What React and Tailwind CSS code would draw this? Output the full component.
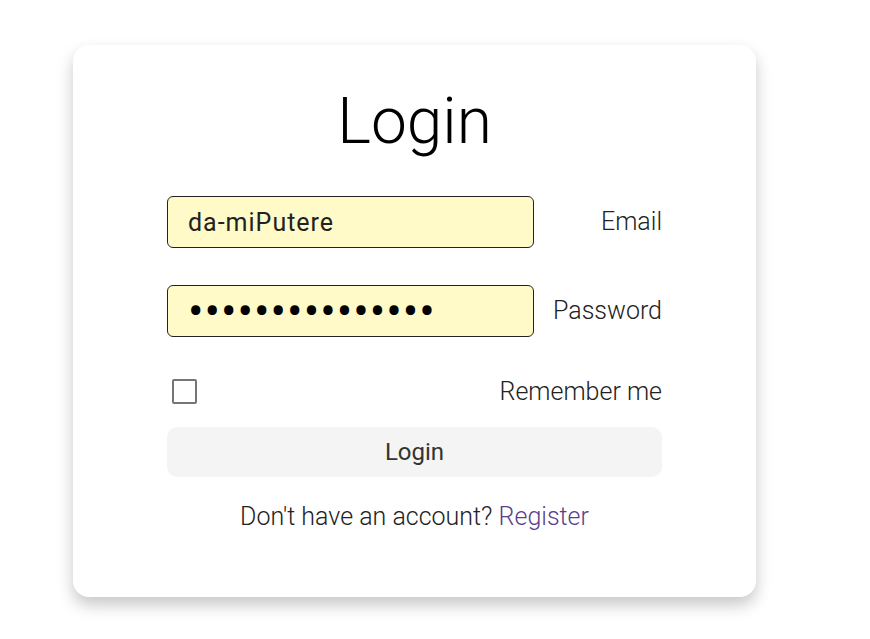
import React, { useState } from 'react';

function App() {
  const [email, setEmail] = useState('da-miPutere');
  const [password, setPassword] = useState('aaaaaaaaaaaaaaa');
  const [remember, setRemember] = useState(false);

  return (
    <div className="min-h-screen bg-white pl-[73px] pt-[45px] font-['Roboto',sans-serif]">
      <div className="w-[683px] h-[552px] rounded-[16px] bg-white shadow-[0_8px_16px_rgba(0,0,0,0.22)] pt-[45px]">
        <h1 className="text-center text-[64px] leading-[64px] font-light text-black">Login</h1>

        <form className="mx-auto mt-[42px] w-[495px]" onSubmit={(e) => e.preventDefault()}>
          {/* Champs */}
          <div className="flex items-center justify-between">
            <input
              type="text"
              value={email}
              onChange={(e) => setEmail(e.target.value)}
              className="h-[52px] w-[367px] rounded-[6px] border border-[#222] bg-[#fffac8] pl-[20px] text-[25px] tracking-[1px] text-[#222] outline-none"
            />
            <label className="text-[25px] font-light text-[#222]">Email</label>
          </div>

          <div className="mt-[37px] flex items-center justify-between">
            <input
              type="password"
              value={password}
              onChange={(e) => setPassword(e.target.value)}
              className="h-[52px] w-[367px] rounded-[6px] border border-[#222] bg-[#fffac8] pl-[20px] text-[46px] leading-none tracking-[1px] text-black outline-none"
            />
            <label className="text-[25px] font-light text-[#222]">Password</label>
          </div>

          {/* Se souvenir */}
          <div className="mt-[42px] flex h-[25px] items-center justify-between">
            <button
              type="button"
              onClick={() => setRemember(!remember)}
              className="ml-[5px] h-[25px] w-[25px] rounded-[2px] border-2 border-[#767676] bg-white"
            >
              {remember && <span className="block text-[16px] leading-[20px] text-[#333]">✓</span>}
            </button>
            <span className="text-[25px] font-light text-[#222]">Remember me</span>
          </div>

          <button
            type="submit"
            className="mt-[23px] h-[50px] w-full rounded-[10px] bg-[#f4f4f4] text-[24px] text-[#333]"
          >
            Login
          </button>

          <p className="mt-[25px] text-center text-[25px] leading-[30px] font-light text-[#222]">
            Don't have an account? <a href="#" className="text-[#5b3f8c]">Register</a>
          </p>
        </form>
      </div>
    </div>
  );
}

export default App;
